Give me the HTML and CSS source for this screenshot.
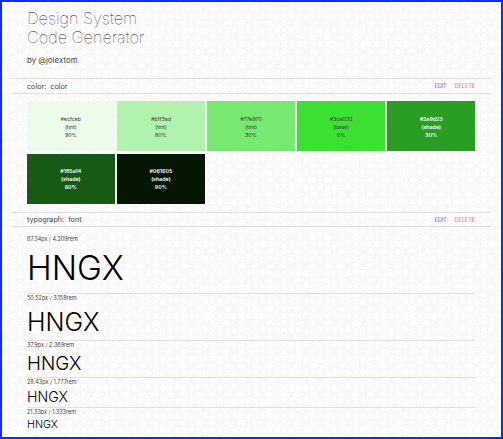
FILE: index.html
```html
<!DOCTYPE html>
<html lang="en">
<head>
<meta charset="utf-8">
<title>Design System Code Generator</title>
<link rel="stylesheet" href="styles.css">
</head>
<body>
<svg class="backdrop" width="503" height="439" aria-hidden="true">
  <defs>
    <path id="link" d="M-4.32-2.83A6.1 6.1 0 0 0 4.32-2.83A4 4 0 1 1 4.32 2.83A6.1 6.1 0 0 0-4.32 2.83A4 4 0 1 1-4.32-2.83Z"/>
    <pattern id="links" x="312.86" y="15.86" width="28.57" height="28.57" patternUnits="userSpaceOnUse">
      <g fill="none" stroke="#efefef" stroke-width=".9">
        <use href="#link" transform="translate(7.14 7.14)"/>
        <use href="#link" transform="translate(35.71 7.14)"/>
        <use href="#link" transform="translate(21.43 21.43)"/>
        <use href="#link" transform="translate(-7.14 21.43)"/>
        <use href="#link" transform="translate(21.43 7.14) rotate(90)"/>
        <use href="#link" transform="translate(21.43 35.71) rotate(90)"/>
        <use href="#link" transform="translate(7.14 21.43) rotate(90)"/>
        <use href="#link" transform="translate(7.14 -7.14) rotate(90)"/>
      </g>
    </pattern>
  </defs>
  <rect width="503" height="439" fill="url(#links)"/>
</svg>
<main class="page">
  <header class="intro">
    <h1 class="title">Design System<br>Code Generator</h1>
    <p class="author">by @jolextom</p>
  </header>
  <section>
    <div class="bar"><h2 class="name">color:&nbsp; color</h2><div class="actions"><span class="edit">EDIT</span><span class="delete">DELETE</span></div></div>
    <div class="swatches">
      <div class="swatch tint-90">#ecfceb<br>(tint)<br>90%</div>
      <div class="swatch tint-60">#b1f3ad<br>(tint)<br>60%</div>
      <div class="swatch tint-30">#77e970<br>(tint)<br>30%</div>
      <div class="swatch base">#3ce032<br>(base)<br>0%</div>
      <div class="swatch shade shade-30">#2a9d23<br>(shade)<br>30%</div>
      <div class="swatch shade shade-60">#185a14<br>(shade)<br>60%</div>
      <div class="swatch shade shade-90">#061605<br>(shade)<br>90%</div>
    </div>
  </section>
  <section>
    <div class="bar bar-type"><h2 class="name">typograph:&nbsp; font</h2><div class="actions"><span class="edit">EDIT</span><span class="delete">DELETE</span></div></div>
    <div class="scale">
      <div class="step step-1"><span class="size">67.34px / 4.209rem</span><span class="sample">HNGX</span></div>
      <div class="step step-2"><span class="size">50.52px / 3.158rem</span><span class="sample">HNGX</span></div>
      <div class="step step-3"><span class="size">37.9px / 2.369rem</span><span class="sample">HNGX</span></div>
      <div class="step step-4"><span class="size">28.43px / 1.777rem</span><span class="sample">HNGX</span></div>
      <div class="step step-5"><span class="size">21.33px / 1.333rem</span><span class="sample">HNGX</span></div>
    </div>
  </section>
</main>
</body>
</html>
```

FILE: styles.css
```css
* { box-sizing: border-box; margin: 0; padding: 0; }
body { background: #fefefe; font-family: Inter, "Liberation Sans", sans-serif; }
.backdrop { position: absolute; top: 0; left: 0; }
.page { position: relative; width: 503px; height: 439px; overflow: hidden; border: 2px solid #0a2cff; padding: 0 10px 0 9px; }
.intro { height: 76px; padding: 7px 16px 0; }
.title { font-size: 16.3px; line-height: 19px; font-weight: 100; color: #222; }
.author { margin-top: 7px; font-size: 7.9px; line-height: 12px; color: #444; }
.bar { height: 16px; display: flex; align-items: center; justify-content: space-between; padding: 0 16px; border: solid #e2e2d4; border-width: 1px 0; }
.bar-type { height: 15px; }
.name { font-size: 7.2px; font-weight: 400; color: #444; }
.actions { display: flex; gap: 8px; font-size: 5.5px; font-weight: 300; }
.edit { color: #3b20ff; }
.delete { color: #ff3030; }
.swatches { display: grid; grid-template-columns: repeat(5, 1fr); grid-auto-rows: 50px; gap: 3px 2.5px; padding: 7px 16px 8px; }
.swatch { padding-top: 14px; text-align: center; font-size: 5.3px; line-height: 8px; color: #333; }
.shade { color: #fff; font-weight: 600; }
.tint-90 { background: #ecfceb; }
.tint-60 { background: #b1f3ad; }
.tint-30 { background: #77e970; }
.base { background: #3ce032; }
.shade-30 { background: #2a9d23; }
.shade-60 { background: #185a14; padding-top: 13px; }
.shade-90 { background: #061605; padding-top: 13px; }
.scale { padding: 0 16px; }
.step { display: flex; flex-direction: column; border-bottom: 1px solid #e2e2d4; }
.step:last-child { border-bottom: 0; }
.size { font-size: 5.5px; line-height: 8px; color: #444; }
.sample { font-weight: 280; color: #000; }
.step-1 { height: 67px; padding-top: 8px; }
.step-2 { height: 47px; }
.step-3 { height: 37px; }
.step-4 { height: 30px; }
.step-1 .sample { font-size: 33.4px; line-height: 51px; }
.step-2 .sample { font-size: 25px; line-height: 40px; }
.step-3 .sample { font-size: 18.8px; line-height: 30px; }
.step-4 .sample { font-size: 14.1px; line-height: 22px; }
.step-5 .sample { font-size: 10.67px; line-height: 17px; }
```
